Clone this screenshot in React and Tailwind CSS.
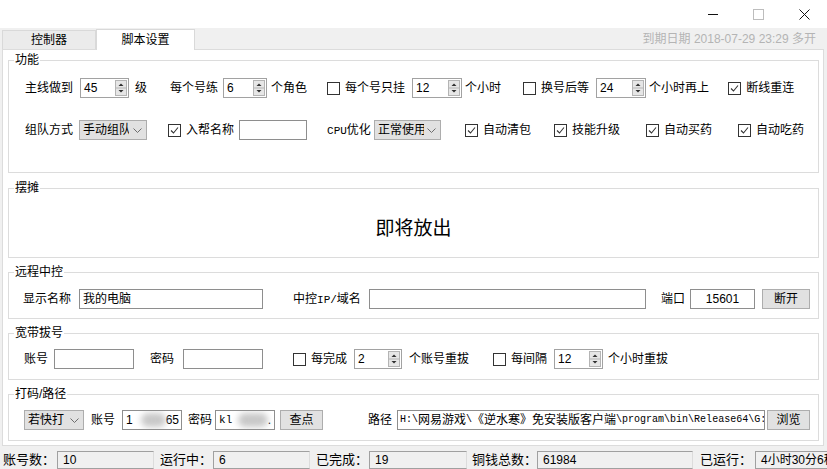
import React from "react";

/* ---------- Small Win32-style widgets ---------- */
function SpinArrows() {
  return (
    <svg width="12" height="16" viewBox="0 0 12 16" className="shrink-0">
      <rect x="0.5" y="0.5" width="11" height="15" fill="#e6e6e6" stroke="#b4b4b4" />
      <line x1="1" y1="8" x2="11" y2="8" stroke="#b4b4b4" />
      <path d="M3.5 6 L6 3.5 L8.5 6 Z" fill="#303030" />
      <path d="M3.5 10 L6 12.5 L8.5 10 Z" fill="#303030" />
    </svg>
  );
}

function Spin({ value, className }) {
  return (
    <div className={`flex h-[20px] items-center border border-[#a2a2a2] bg-white pr-[1px] ${className}`}>
      <span className="flex-1 pl-[3px] text-[12px] leading-[16px]">{value}</span>
      <SpinArrows />
    </div>
  );
}

function Check({ checked, label }) {
  return (
    <div className="flex items-center">
      <span className="flex h-[13px] w-[13px] shrink-0 items-center justify-center border border-[#333333] bg-white">
        {checked && (
          <svg width="9" height="9" viewBox="0 0 9 9">
            <path d="M1 4.5 L3.5 7 L8 1.5" fill="none" stroke="#333333" strokeWidth="1.1" />
          </svg>
        )}
      </span>
      <span className="ml-[5px] whitespace-nowrap text-[12px] leading-[16px]">{label}</span>
    </div>
  );
}

function Combo({ text, className, textW }) {
  return (
    <div className={`flex h-[20px] items-center border border-[#adadad] bg-[#e1e1e1] pl-[3px] pr-[4px] ${className}`}>
      <span className={`overflow-hidden whitespace-nowrap text-[12px] leading-[16px] ${textW}`}>{text}</span>
      <svg width="9" height="5" viewBox="0 0 9 5" className="ml-auto shrink-0">
        <path d="M0.5 0.5 L4.5 4.5 L8.5 0.5" fill="none" stroke="#6d6d6d" />
      </svg>
    </div>
  );
}

function Input({ className, children }) {
  return (
    <div className={`flex h-[20px] items-center overflow-hidden whitespace-nowrap border border-[#8e8e8e] bg-white text-[12px] leading-[16px] ${className}`}>
      {children}
    </div>
  );
}

function Btn({ text, className }) {
  return (
    <div className={`flex h-[20px] items-center justify-center border border-[#adadad] bg-[#e1e1e1] text-[12px] leading-[16px] ${className}`}>
      {text}
    </div>
  );
}

function Group({ title, className, children }) {
  return (
    <fieldset className={`ml-[5px] w-[811px] border border-[#dcdcdc] ${className}`}>
      <legend className="ml-[5px] h-[16px] px-[1px] text-[12px] leading-[16px]">{title}</legend>
      {children}
    </fieldset>
  );
}

function Blur({ className }) {
  return <span className={`h-[14px] rounded-full bg-[#c8c8c8] blur-[3px] ${className}`} />;
}

function StatusItem({ label, value, className, labelW, boxW }) {
  return (
    <div className={`flex items-center ${className}`}>
      <span className={`whitespace-nowrap text-[13px] leading-[16px] ${labelW}`}>{label}</span>
      <div className={`flex h-[18px] items-center overflow-hidden whitespace-nowrap border border-[#a0a0a0] border-r-[#dcdcdc] bg-[#f0f0f0] pl-[5px] text-[12px] ${boxW}`}>
        {value}
      </div>
    </div>
  );
}

const M = "font-['Liberation_Mono',monospace] text-[10px]";
const M11 = "font-['Liberation_Mono',monospace] text-[11px]";

export default function App() {
  return (
    <div className="h-[469px] w-[827px] overflow-hidden bg-[#f0f0f0] font-['Liberation_Sans','Noto_Sans_CJK_SC',sans-serif] text-black">
      {/* title bar */}
      <div className="flex h-[28px] items-center bg-white">
        <svg width="10" height="10" viewBox="0 0 10 10" className="ml-[708px]">
          <line x1="0" y1="5.5" x2="10" y2="5.5" stroke="#111" />
        </svg>
        <svg width="11" height="11" viewBox="0 0 11 11" className="ml-[35px]">
          <rect x="0.5" y="0.5" width="10" height="10" fill="none" stroke="#bdbdbd" />
        </svg>
        <svg width="11" height="11" viewBox="0 0 11 11" className="ml-[35px]">
          <path d="M0.5 0.5 L10.5 10.5 M10.5 0.5 L0.5 10.5" stroke="#111" />
        </svg>
      </div>

      {/* tabs */}
      <div className="flex h-[21px] items-end">
        <div className="ml-[2px] flex h-[19px] w-[94px] items-center justify-center border border-b-0 border-[#d9d9d9] bg-[#ebebeb] text-[12px] leading-[16px]">
          控制器
        </div>
        <div className="relative top-[1px] flex h-[21px] w-[99px] items-center justify-center border border-b-0 border-[#d9d9d9] bg-white text-[12px] leading-[16px]">
          脚本设置
        </div>
        <div className="ml-auto mr-[11px] self-center whitespace-nowrap text-[12px] leading-[16px] text-[#b4b4b4]">
          到期日期 2018-07-29 23:29 多开
        </div>
      </div>

      {/* panel */}
      <div className="ml-[2px] h-[397px] w-[822px] border border-[#dcdcdc] bg-white pt-[2px]">
        <Group title="功能">
          <div className="mt-[10px] flex h-[20px] items-center text-[12px] leading-[16px]">
            <span className="ml-[16px]">主线做到</span>
            <Spin value="45" className="ml-[7px] w-[49px]" />
            <span className="ml-[6px]">级</span>
            <span className="ml-[23px]">每个号练</span>
            <Spin value="6" className="ml-[5px] w-[44px]" />
            <span className="ml-[4px]">个角色</span>
            <div className="ml-[20px]"><Check label="每个号只挂" /></div>
            <Spin value="12" className="ml-[7px] w-[50px]" />
            <span className="ml-[3px]">个小时</span>
            <div className="ml-[22px]"><Check label="换号后等" /></div>
            <Spin value="24" className="ml-[7px] w-[50px]" />
            <span className="ml-[3px]">个小时再上</span>
            <div className="ml-[19px]"><Check checked label="断线重连" /></div>
          </div>
          <div className="mb-[32px] mt-[22px] flex h-[20px] items-center text-[12px] leading-[16px]">
            <span className="ml-[16px]">组队方式</span>
            <Combo text="手动组队" className="ml-[6px] w-[68px]" textW="w-[46px]" />
            <div className="ml-[21px]"><Check checked label="入帮名称" /></div>
            <Input className="ml-[5px] w-[68px]" />
            <span className="ml-[20px] w-[42px] whitespace-nowrap">
              <span className={M11}>CPU</span>优化
            </span>
            <Combo text="正常使用" className="ml-[5px] w-[67px]" textW="w-[46px]" />
            <div className="ml-[24px]"><Check checked label="自动清包" /></div>
            <div className="ml-[23px]"><Check checked label="技能升级" /></div>
            <div className="ml-[26px]"><Check checked label="自动买药" /></div>
            <div className="ml-[26px]"><Check checked label="自动吃药" /></div>
          </div>
        </Group>

        <Group title="摆摊" className="mt-[7px]">
          <div className="flex h-[61px] items-center justify-center pt-[5px] text-[19px]">
            即将放出
          </div>
        </Group>

        <Group title="远程中控" className="mt-[6px]">
          <div className="mb-[9px] mt-[9px] flex h-[20px] items-center text-[12px] leading-[16px]">
            <span className="ml-[14px]">显示名称</span>
            <Input className="ml-[8px] w-[184px] pl-[3px]">我的电脑</Input>
            <span className="ml-[30px] w-[66px] whitespace-nowrap">
              中控<span className={M11}>IP/</span>域名
            </span>
            <Input className="ml-[10px] w-[277px]" />
            <span className="ml-[15px]">端口</span>
            <Input className="ml-[5px] w-[65px] justify-center">15601</Input>
            <Btn text="断开" className="ml-[7px] w-[48px]" />
          </div>
        </Group>

        <Group title="宽带拔号" className="mt-[6px]">
          <div className="mb-[10px] mt-[8px] flex h-[20px] items-center text-[12px] leading-[16px]">
            <span className="ml-[15px]">账号</span>
            <Input className="ml-[6px] w-[80px]" />
            <span className="ml-[16px]">密码</span>
            <Input className="ml-[9px] w-[80px]" />
            <div className="ml-[30px]"><Check label="每完成" /></div>
            <Spin value="2" className="ml-[7px] w-[48px]" />
            <span className="ml-[7px]">个账号重拔</span>
            <div className="ml-[24px]"><Check label="每间隔" /></div>
            <Spin value="12" className="ml-[7px] w-[49px]" />
            <span className="ml-[5px]">个小时重拔</span>
          </div>
        </Group>

        <Group title="打码/路径" className="mt-[6px]">
          <div className="mb-[10px] mt-[8px] flex h-[20px] items-center text-[12px] leading-[16px]">
            <Combo text="若快打" className="ml-[15px] w-[60px]" textW="w-[38px]" />
            <span className="ml-[7px]">账号</span>
            <Input className="ml-[7px] w-[60px] pl-[3px]">
              <span>1</span>
              <Blur className="ml-[8px] w-[30px]" />
              <span className="ml-auto pr-[2px]">65</span>
            </Input>
            <span className="ml-[6px]">密码</span>
            <Input className="ml-[3px] w-[60px] pl-[3px]">
              <span className={M11}>kl</span>
              <Blur className="ml-[6px] w-[34px]" />
              <span className="ml-auto pr-[3px]">.</span>
            </Input>
            <Btn text="查点" className="ml-[5px] w-[43px]" />
            <span className="ml-[45px]">路径</span>
            <Input className="ml-[5px] w-[368px] pl-[2px]">
              <span className={M}>H:\</span>网易游戏<span className={M}>\</span>《逆水寒》免安装版客户端
              <span className={M}>\program\bin\Release64\G:</span>
            </Input>
            <Btn text="浏览" className="ml-[2px] w-[43px]" />
          </div>
        </Group>
      </div>

      {/* status bar */}
      <div className="flex h-[23px] items-end">
        <StatusItem label="账号数：" value="10" className="ml-[3px]" labelW="w-[54px]" boxW="w-[97px]" />
        <StatusItem label="运行中：" value="6" className="ml-[6px]" labelW="w-[53px]" boxW="w-[97px]" />
        <StatusItem label="已完成：" value="19" className="ml-[6px]" labelW="w-[53px]" boxW="w-[98px]" />
        <StatusItem label="铜钱总数：" value="61984" className="ml-[5px]" labelW="w-[65px]" boxW="w-[156px]" />
        <StatusItem label="已运行：" value="4小时30分6秒" className="ml-[7px]" labelW="w-[55px]" boxW="w-[90px]" />
      </div>
    </div>
  );
}
